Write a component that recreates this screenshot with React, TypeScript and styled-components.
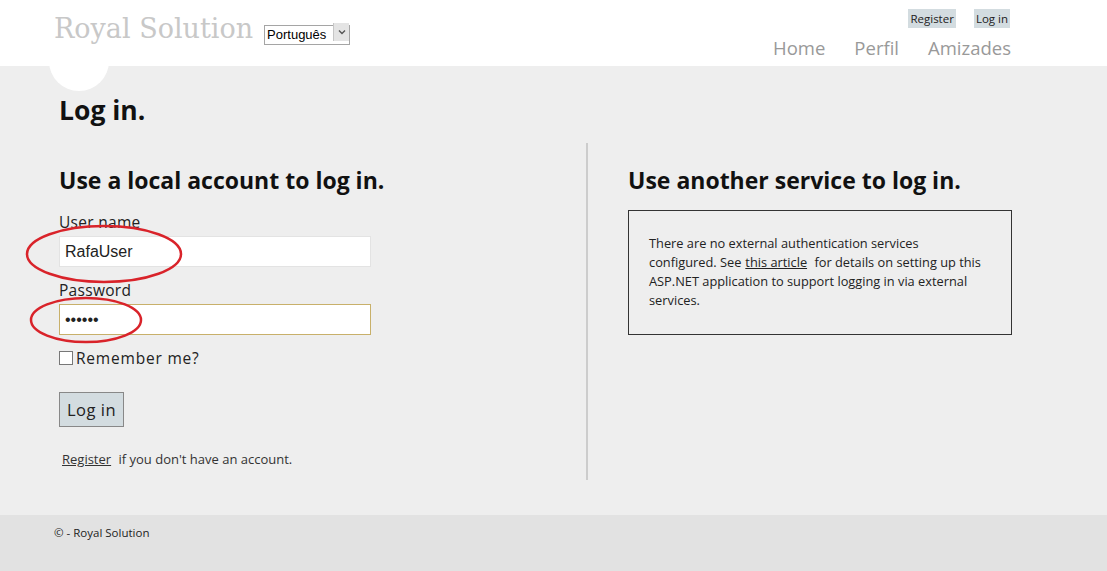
import styled, { createGlobalStyle } from "styled-components";

const GlobalStyle = createGlobalStyle`
  html, body {
    margin: 0;
    padding: 0;
    background: #eeeeee;
    font-family: "Open Sans", "Noto Sans", sans-serif;
    color: #111;
  }
`;

const S = {
  Page: styled.div`
    width: 1107px;
    height: 571px;
    display: flex;
    flex-direction: column;
    overflow: hidden;
  `,
  Header: styled.header`
    position: relative;
    flex-shrink: 0;
    height: 66px;
    background: #fff;
    display: flex;
    justify-content: space-between;
    padding: 0 96px 0 54px;
    box-sizing: border-box;
  `,
  Bubble: styled.div`
    position: absolute;
    left: 49px;
    top: 31px;
    width: 60px;
    height: 60px;
    border-radius: 50%;
    background: #fff;
  `,
  Brand: styled.div`
    position: relative;
    display: flex;
    align-items: flex-start;
    gap: 11px;
    padding-top: 12px;
  `,
  Logo: styled.div`
    font-family: "DejaVu Serif", serif;
    font-size: 27px;
    color: #c8c8c8;
    line-height: 34px;
  `,
  LangWrap: styled.div`
    position: relative;
    margin-top: 10px;
    height: 20px;
  `,
  Lang: styled.select`
    appearance: none;
    -webkit-appearance: none;
    height: 20px;
    width: 86px;
    font-family: "Liberation Sans", Arial, sans-serif;
    font-size: 13px;
    border: 1px solid #a5a5a5;
    border-radius: 0;
    background: #fff;
    padding: 0 2px;
    color: #000;
    outline: none;
  `,
  Arrow: styled.span`
    position: absolute;
    right: 1px;
    top: 1px;
    width: 16px;
    height: 18px;
    box-sizing: border-box;
    background: #e4e4e4;
    border-left: 1px solid #c6c6c6;
    display: flex;
    align-items: center;
    justify-content: center;
    pointer-events: none;
  `,
  Right: styled.div`
    display: flex;
    flex-direction: column;
    align-items: flex-end;
    padding-top: 9px;
  `,
  TopLinks: styled.div`
    display: flex;
    gap: 18px;
    margin-right: 1px;
  `,
  TopLink: styled.span`
    background: #d3dce0;
    font-size: 11.5px;
    line-height: 19px;
    padding: 0 2px;
    color: #222;
  `,
  Nav: styled.nav`
    display: flex;
    gap: 29px;
    margin-top: 8px;
  `,
  NavLink: styled.span`
    font-size: 18.5px;
    color: #999;
    line-height: 24px;
  `,
  Main: styled.main`
    flex: 1;
    padding: 29px 0 0 59px;
    box-sizing: border-box;
  `,
  Title: styled.h1`
    margin: 0;
    font-size: 26.5px;
    font-weight: 700;
    line-height: 30px;
  `,
  Columns: styled.div`
    display: flex;
    margin-top: 18px;
  `,
  LeftCol: styled.section`
    width: 529px;
    height: 337px;
    border-right: 2px solid #cccccc;
    box-sizing: border-box;
    padding-top: 22px;
  `,
  RightCol: styled.section`
    padding-left: 40px;
    padding-top: 22px;
  `,
  SubTitle: styled.h2`
    margin: 0 0 19px;
    font-size: 23px;
    font-weight: 700;
    line-height: 30px;
  `,
  Label: styled.label`
    display: block;
    font-size: 15.5px;
    letter-spacing: 0.3px;
    color: #222;
    line-height: 17px;
    margin-bottom: 5px;
  `,
  Field: styled.div`
    position: relative;
    width: 312px;
    margin: 0 0 15px;
  `,
  Input: styled.input<{ $focus?: boolean }>`
    display: block;
    width: 312px;
    height: 31px;
    box-sizing: border-box;
    border: 1px solid ${(p) => (p.$focus ? "#c8b06a" : "#e3e3e3")};
    background: #fff;
    padding: 0 5px;
    font-family: "Liberation Sans", Arial, sans-serif;
    font-size: 16px;
    color: #222;
    outline: none;
  `,
  Ring: styled.svg`
    position: absolute;
    pointer-events: none;
    overflow: visible;
  `,
  Remember: styled.div`
    display: flex;
    align-items: center;
    gap: 3px;
    margin-top: -2px;
    font-size: 15.5px;
    line-height: 20px;
    letter-spacing: 0.8px;
    color: #222;
  `,
  Check: styled.span`
    width: 12px;
    height: 12px;
    border: 1px solid #777;
    background: #fff;
  `,
  Button: styled.button`
    display: block;
    margin-top: 24px;
    height: 35px;
    padding: 0 7px;
    background: #d3dce0;
    border: 1px solid #888;
    font-family: "Open Sans", sans-serif;
    font-size: 16.5px;
    letter-spacing: 0.5px;
    color: #222;
  `,
  Hint: styled.p`
    margin: 24px 0 0 3px;
    font-size: 13px;
    line-height: 16px;
    color: #333;
  `,
  Link: styled.span`
    text-decoration: underline;
    margin-right: 4px;
  `,
  InlineLink: styled.span`
    text-decoration: underline;
    margin: 0 4px;
  `,
  Box: styled.div`
    margin-top: -4px;
    width: 384px;
    height: 125px;
    border: 1px solid #333;
    box-sizing: border-box;
    padding: 23px 10px 0 20px;
    font-size: 12.8px;
    line-height: 19px;
    color: #222;
  `,
  Footer: styled.footer`
    flex-shrink: 0;
    height: 56px;
    background: #e2e2e2;
    padding: 10px 54px 0;
    box-sizing: border-box;
    font-size: 11.5px;
    line-height: 16px;
    color: #222;
  `,
};

const App = () => {
  return (
    <S.Page>
      <GlobalStyle />
      <S.Header>
        <S.Bubble />
        <S.Brand>
          <S.Logo>Royal Solution</S.Logo>
          <S.LangWrap>
            <S.Lang defaultValue="pt">
              <option value="pt">Português</option>
              <option value="en">English</option>
            </S.Lang>
            <S.Arrow>
              <svg width="8" height="6" viewBox="0 0 8 6">
                <path d="M1 1.5 L4 4.5 L7 1.5" fill="none" stroke="#555" strokeWidth="1.4" />
              </svg>
            </S.Arrow>
          </S.LangWrap>
        </S.Brand>
        <S.Right>
          <S.TopLinks>
            <S.TopLink>Register</S.TopLink>
            <S.TopLink>Log in</S.TopLink>
          </S.TopLinks>
          <S.Nav>
            <S.NavLink>Home</S.NavLink>
            <S.NavLink>Perfil</S.NavLink>
            <S.NavLink>Amizades</S.NavLink>
          </S.Nav>
        </S.Right>
      </S.Header>

      <S.Main>
        <S.Title>Log in.</S.Title>
        <S.Columns>
          <S.LeftCol>
            <S.SubTitle>Use a local account to log in.</S.SubTitle>
            <S.Label>User name</S.Label>
            <S.Field>
              <S.Input defaultValue="RafaUser" />
              <S.Ring width="156" height="57" style={{ left: -33, top: -10 }}>
                <ellipse cx="78" cy="28" rx="77" ry="28" fill="none" stroke="#d9232a" strokeWidth="2.5" />
              </S.Ring>
            </S.Field>
            <S.Label>Password</S.Label>
            <S.Field>
              <S.Input $focus type="password" defaultValue="123456" />
              <S.Ring width="112" height="45" style={{ left: -29, top: -6 }}>
                <ellipse cx="56" cy="22" rx="55" ry="22" fill="none" stroke="#d9232a" strokeWidth="2.5" />
              </S.Ring>
            </S.Field>
            <S.Remember>
              <S.Check />
              Remember me?
            </S.Remember>
            <S.Button>Log in</S.Button>
            <S.Hint>
              <S.Link>Register</S.Link> if you don't have an account.
            </S.Hint>
          </S.LeftCol>
          <S.RightCol>
            <S.SubTitle>Use another service to log in.</S.SubTitle>
            <S.Box>
              There are no external authentication services
              <br />
              configured. See<S.InlineLink>this article</S.InlineLink> for details on setting up this
              <br />
              ASP.NET application to support logging in via external
              <br />
              services.
            </S.Box>
          </S.RightCol>
        </S.Columns>
      </S.Main>

      <S.Footer>© - Royal Solution</S.Footer>
    </S.Page>
  );
};

export default App;
